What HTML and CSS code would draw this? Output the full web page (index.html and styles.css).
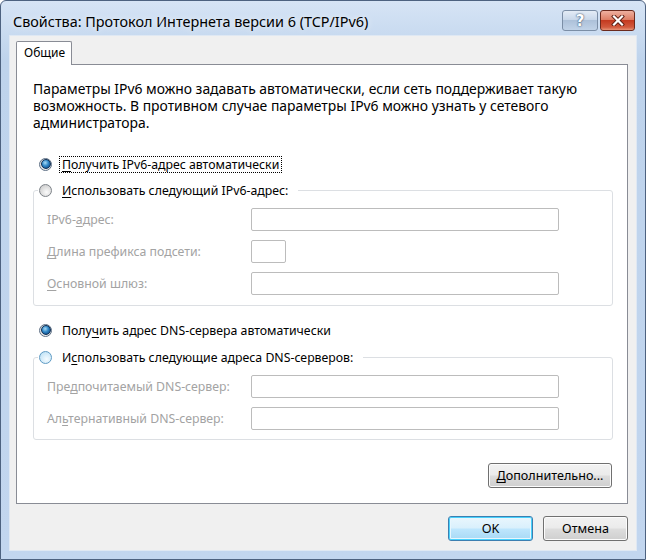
FILE: index.html
```html
<!DOCTYPE html>
<html lang="ru">
<head>
  <meta charset="UTF-8" />
  <title>Свойства: Протокол Интернета версии 6 (TCP/IPv6)</title>
  <link rel="stylesheet" href="styles.css">
</head>
<body>
  <div class="window">
    <div class="titlebar">
      <span class="title">Свойства: Протокол Интернета версии 6 (TCP/IPv6)</span>
      <div class="caption-buttons">
        <span class="cap-btn help">?</span>
        <span class="cap-btn close">
          <svg width="14" height="11" viewBox="0 0 14 11">
            <path d="M3 1.5 L11 9.5 M11 1.5 L3 9.5" stroke="#5a1d12" stroke-width="4" stroke-linecap="square" fill="none"/>
            <path d="M3 1.5 L11 9.5 M11 1.5 L3 9.5" stroke="#fff" stroke-width="2.2" stroke-linecap="square" fill="none"/>
          </svg>
        </span>
      </div>
    </div>

    <div class="client">
      <div class="tabs">
        <div class="tab active">Общие</div>
      </div>

      <div class="panel">
        <p class="intro">Параметры IPv6 можно задавать автоматически, если сеть поддерживает такую возможность. В противном случае параметры IPv6 можно узнать у сетевого администратора.</p>

        <div class="radio-row">
          <span class="radio checked"></span>
          <span class="radio-label focused"><u>П</u>олучить IPv6-адрес автоматически</span>
        </div>

        <fieldset class="group">
          <legend>
            <span class="radio"></span>
            <span class="radio-label"><u>И</u>спользовать следующий IPv6-адрес:</span>
          </legend>
          <div class="field">
            <span class="field-label">IPv6-<u>а</u>дрес:</span>
            <span class="input wide"></span>
          </div>
          <div class="field">
            <span class="field-label"><u>Д</u>лина префикса подсети:</span>
            <span class="input short"></span>
          </div>
          <div class="field">
            <span class="field-label"><u>О</u>сновной шлюз:</span>
            <span class="input wide"></span>
          </div>
        </fieldset>

        <div class="radio-row dns">
          <span class="radio checked"></span>
          <span class="radio-label">Полу<u>ч</u>ить адрес DNS-сервера автоматически</span>
        </div>

        <fieldset class="group dns-group">
          <legend>
            <span class="radio hot"></span>
            <span class="radio-label">И<u>с</u>пользовать следующие адреса DNS-серверов:</span>
          </legend>
          <div class="field">
            <span class="field-label">Пре<u>д</u>почитаемый DNS-сервер:</span>
            <span class="input wide"></span>
          </div>
          <div class="field">
            <span class="field-label">Ал<u>ь</u>тернативный DNS-сервер:</span>
            <span class="input wide"></span>
          </div>
        </fieldset>

        <div class="panel-actions">
          <button class="btn advanced"><u>Д</u>ополнительно...</button>
        </div>
      </div>

      <div class="dialog-buttons">
        <button class="btn default">OK</button>
        <button class="btn">Отмена</button>
      </div>
    </div>
  </div>
</body>
</html>
```

FILE: styles.css
```css
* {
  box-sizing: border-box;
}

body {
  margin: 0;
  background: #fff;
  font-family: "Noto Sans", "Open Sans", sans-serif;
  font-size: 12.3px;
  color: #000;
}

u {
  text-decoration: underline;
  text-underline-offset: 2px;
}

.window {
  width: 646px;
  height: 560px;
  border: 1px solid #4d6280;
  border-radius: 6px 6px 0 0;
  background: linear-gradient(#d6e4f5, #bed3ec 60px, #c2d6ef);
  display: flex;
  flex-direction: column;
}

.titlebar {
  height: 34px;
  display: flex;
  align-items: flex-start;
  justify-content: space-between;
  padding: 0 10px 0 12px;
}

.title {
  font-size: 14.4px;
  line-height: 18px;
  margin-top: 12px;
  color: #000;
  text-shadow: 0 0 6px rgba(255, 255, 255, 0.9);
}

.caption-buttons {
  display: flex;
  gap: 2px;
  margin-top: 9px;
}

.cap-btn {
  height: 21px;
  border-radius: 3px;
  display: flex;
  align-items: center;
  justify-content: center;
}

.help {
  width: 36px;
  border: 1px solid #7b8ea6;
  background: linear-gradient(#e4ecf6, #c9d8ea 45%, #adc1d9 50%, #c1d3e8);
  color: #fff;
  font-weight: bold;
  font-size: 15px;
  font-family: "DejaVu Sans", sans-serif;
  text-shadow: 0 0 2px #3d5472, 0 0 1px #3d5472;
}

.close {
  width: 35px;
  border: 1px solid #6b2a1d;
  background: linear-gradient(#eeb0a0, #de7f66 45%, #c43a20 50%, #d25a3e 85%, #e69377);
}

.client {
  flex: 1;
  margin: 0 8px 8px;
  border: 1px solid #dfe8f3;
  background: #f0f0f0;
  padding: 5px 8px 9px 6px;
  display: flex;
  flex-direction: column;
}

.tabs {
  display: flex;
  position: relative;
  z-index: 1;
  margin-bottom: -1px;
}

.tab {
  width: 56px;
  height: 24px;
  border: 1px solid #898c95;
  border-bottom: none;
  border-radius: 2px 2px 0 0;
  background: #fff;
  padding-left: 7px;
  line-height: 22px;
  font-size: 12px;
}

.panel {
  height: 440px;
  border: 1px solid #898c95;
  background: #fff;
  padding: 15px 15px 0 16px;
}

.intro {
  margin: 0;
  line-height: 17px;
  font-size: 13.9px;
}

.radio-row,
legend {
  display: flex;
  align-items: center;
  height: 16px;
}

.radio-row {
  margin-top: 25px;
  padding-left: 6px;
}

.radio-row.dns {
  margin-top: 16px;
}

.radio {
  width: 13px;
  height: 13px;
  border-radius: 50%;
  border: 1px solid #7e8389;
  background: radial-gradient(circle at 60% 65%, #fbfbfb, #d4d4d4 70%, #bdbdbd);
  margin-right: 8px;
  flex: none;
  display: flex;
  align-items: center;
  justify-content: center;
}

.radio.hot {
  border-color: #5f9bc4;
  background: radial-gradient(circle at 60% 65%, #f4fbff, #c8e6f7 70%, #a8d3ee);
}

.radio.checked {
  border-color: #5f7186;
  background: radial-gradient(circle at 60% 65%, #fdfdfd, #dedede 70%, #c6c6c6);
}

.radio.checked::after {
  content: "";
  width: 8px;
  height: 8px;
  border-radius: 50%;
  border: 1px solid #0e2f55;
  background: radial-gradient(circle at 40% 35%, #a9dcf7, #2f86c6 45%, #0f467f 90%);
}

.radio-label {
  padding: 0 2px;
  line-height: 15px;
}

.radio-label.focused {
  outline: 1px dotted #000;
  outline-offset: 0;
}

.group {
  margin: 10px 0 0;
  padding: 10px 0 10px;
  border: 1px solid #dcdfe3;
  border-radius: 3px;
  width: 580px;
}

.group legend {
  margin-left: 4px;
  padding: 0 8px 0 1px;
}

.dns-group {
  margin-top: 11px;
  padding-bottom: 9px;
}

.field {
  display: flex;
  align-items: center;
  padding-left: 13px;
  height: 23px;
}

.field + .field {
  margin-top: 9px;
}

.field-label {
  width: 204px;
  color: #a3a3a3;
}

.input {
  height: 23px;
  border: 1px solid #bcbcbc;
  border-radius: 2px;
  background: #fff;
}

.input.wide {
  width: 308px;
}

.input.short {
  width: 35px;
}

.panel-actions {
  display: flex;
  justify-content: flex-end;
  margin-top: 23px;
}

.btn {
  height: 25px;
  font-family: inherit;
  font-size: 12.6px;
  color: #000;
  border: 1px solid #707070;
  border-radius: 3px;
  background: linear-gradient(#f2f2f2, #ebebeb 48%, #dddddd 52%, #cfcfcf);
  box-shadow: inset 0 0 0 1px #fcfcfc;
  padding: 0;
}

.btn.advanced {
  width: 124px;
}

.dialog-buttons {
  display: flex;
  justify-content: flex-end;
  gap: 10px;
  margin-top: 12px;
}

.dialog-buttons .btn {
  width: 85px;
}

.btn.default {
  border-color: #3c7fb1;
  background: linear-gradient(#eaf6fd, #d9f0fc 48%, #bee6fd 52%, #a7d9f5);
  box-shadow: inset 0 0 0 1px #48d1fc, inset 0 0 0 2px #e8f6fd;
}
```
